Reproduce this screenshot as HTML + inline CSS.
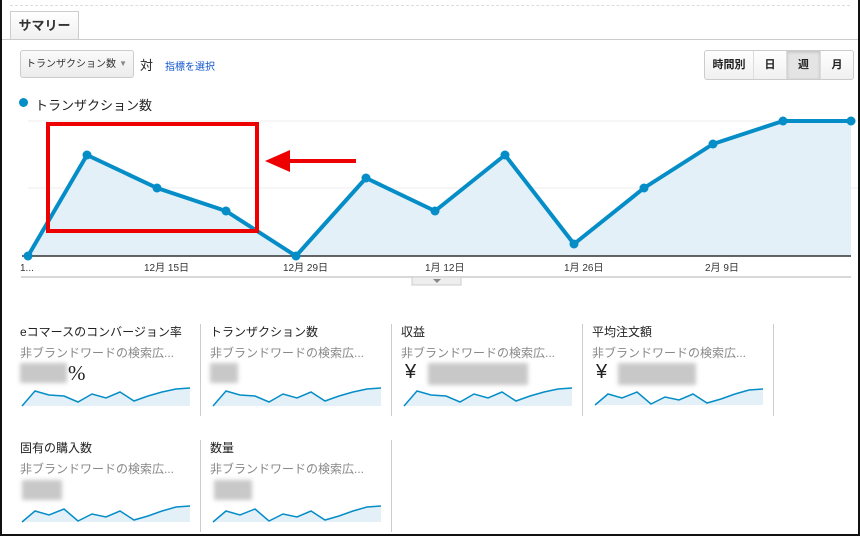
<!DOCTYPE html>
<html><head><meta charset="utf-8"><style>
body{margin:0;width:860px;height:536px;overflow:hidden;font-family:"Liberation Sans","Noto Sans CJK JP",sans-serif;background:#fff;position:relative}
.abs{position:absolute}
.tab{left:10px;top:11px;width:67px;height:27px;border:1px solid #ccc;border-bottom:none;background:linear-gradient(#fff,#f0f0f0);font-size:13px;font-weight:bold;color:#333;text-align:center;line-height:28px}
.sel{left:20px;top:50px;width:114px;height:28px;border:1px solid #ccc;border-radius:3px;background:linear-gradient(#fafafa,#ececec);font-size:10px;line-height:26px;padding-left:5px;box-sizing:border-box;color:#333}
.btns{left:704px;top:50px;height:28px;border:1px solid #ccc;border-radius:3px;display:flex;background:linear-gradient(#fff,#f0f0f0);overflow:hidden}
.btns div{font-size:11px;font-weight:bold;line-height:28px;text-align:center;border-left:1px solid #ddd;color:#222}
.card .t{font-size:12px;color:#222}
.card .s{font-size:12px;color:#888;margin-top:4px}
.blur{background:#c8c8c8;filter:blur(2px);position:absolute}
.div{position:absolute;width:1px;background:#ccc}
</style></head><body>
<div class="abs" style="left:0;top:0;width:860px;height:536px;border:2px solid #111;box-sizing:border-box;border-top:none"></div>
<div class="abs" style="left:10px;top:5px;width:840px;border-top:1px dashed #ddd"></div>
<div class="abs" style="left:2px;top:39px;width:856px;border-top:1px solid #ccc"></div>
<div class="abs tab">サマリー</div>
<div class="abs sel" style="padding-top:1px">トランザクション数<span style="position:absolute;right:6px;top:0;color:#888;font-size:8px">▼</span></div>
<div class="abs" style="left:140px;top:55px;font-size:13px;color:#222">対</div>
<div class="abs" style="left:165px;top:58px;font-size:10px;color:#15c">指標を選択</div>
<div class="abs btns"><div style="width:48px;border:none">時間別</div><div style="width:32px">日</div><div style="width:33px;background:#e4e4e4;box-shadow:inset 0 1px 3px #bbb">週</div><div style="width:32px">月</div></div>
<div class="abs" style="left:19px;top:98px;width:9px;height:9px;border-radius:50%;background:#058dc7"></div>
<div class="abs" style="left:35px;top:95px;font-size:13px;color:#222">トランザクション数</div>
<svg class="abs" style="left:0;top:110px" width="860" height="180">
<line x1="28" y1="11" x2="858" y2="11" stroke="#eee"/>
<line x1="28" y1="78" x2="858" y2="78" stroke="#eee"/>
<polygon points="28,146 87,45 157,78 226,101 296,146 366,68 435,101 505,45 574,134 644,78 713,34 783,11 851,11 851,146" fill="#e3f0f7"/>
<line x1="22" y1="146" x2="851" y2="146" stroke="#333" stroke-width="1.5"/>
<polyline points="28,146 87,45 157,78 226,101 296,146 366,68 435,101 505,45 574,134 644,78 713,34 783,11 851,11" fill="none" stroke="#058dc7" stroke-width="4" stroke-linejoin="round"/>
<g fill="#058dc7"><circle cx="28" cy="146" r="4.5"/><circle cx="87" cy="45" r="4.5"/><circle cx="157" cy="78" r="4.5"/><circle cx="226" cy="101" r="4.5"/><circle cx="296" cy="146" r="4.5"/><circle cx="366" cy="68" r="4.5"/><circle cx="435" cy="101" r="4.5"/><circle cx="505" cy="45" r="4.5"/><circle cx="574" cy="134" r="4.5"/><circle cx="644" cy="78" r="4.5"/><circle cx="713" cy="34" r="4.5"/><circle cx="783" cy="11" r="4.5"/><circle cx="851" cy="11" r="4.5"/></g>
<rect x="48" y="14" width="209" height="107" fill="none" stroke="#e00" stroke-width="4"/>
<line x1="356" y1="51" x2="285" y2="51" stroke="#e00" stroke-width="4"/>
<polygon points="265,51 290,40 290,62" fill="#e00"/>
<line x1="21" y1="167" x2="851" y2="167" stroke="#ccc" stroke-width="1.5"/>
<rect x="412" y="167" width="49" height="8" fill="#eee" stroke="#ccc"/>
<polygon points="433,169 441,169 437,173" fill="#888"/>
<g font-size="10" fill="#333"><text x="20" y="161">1...</text><text x="144" y="161">12月 15日</text><text x="283" y="161">12月 29日</text><text x="425" y="161">1月 12日</text><text x="564" y="161">1月 26日</text><text x="705" y="161">2月 9日</text></g>
</svg>
<div class="div" style="left:200px;top:324px;height:92px"></div><div class="div" style="left:391px;top:324px;height:92px"></div><div class="div" style="left:582px;top:324px;height:92px"></div><div class="div" style="left:773px;top:324px;height:92px"></div>
<div class="div" style="left:200px;top:440px;height:92px"></div><div class="div" style="left:391px;top:440px;height:92px"></div>
<div class="abs card" style="left:20px;top:323px"><div class="t">eコマースのコンバージョン率</div><div class="s">非ブランドワードの検索広...</div></div>
<div class="abs card" style="left:210px;top:323px"><div class="t">トランザクション数</div><div class="s">非ブランドワードの検索広...</div></div>
<div class="abs card" style="left:401px;top:323px"><div class="t">収益</div><div class="s">非ブランドワードの検索広...</div></div>
<div class="abs card" style="left:592px;top:323px"><div class="t">平均注文額</div><div class="s">非ブランドワードの検索広...</div></div>
<div class="abs card" style="left:20px;top:439px"><div class="t">固有の購入数</div><div class="s">非ブランドワードの検索広...</div></div>
<div class="abs card" style="left:210px;top:439px"><div class="t">数量</div><div class="s">非ブランドワードの検索広...</div></div>
<div class="blur" style="left:20px;top:363px;width:47px;height:20px"></div>
<div class="abs" style="left:68px;top:361px;font-size:21px;color:#222;font-family:'Liberation Serif',serif">%</div>
<div class="blur" style="left:210px;top:363px;width:28px;height:20px"></div>
<div class="abs" style="left:405px;top:361px;font-size:20px;color:#222">¥</div>
<div class="blur" style="left:428px;top:363px;width:100px;height:22px"></div>
<div class="abs" style="left:596px;top:361px;font-size:20px;color:#222">¥</div>
<div class="blur" style="left:618px;top:363px;width:78px;height:22px"></div>
<div class="blur" style="left:22px;top:480px;width:40px;height:20px"></div>
<div class="blur" style="left:214px;top:480px;width:38px;height:20px"></div>
<svg class="abs" style="left:0;top:0" width="860" height="536">
<defs><g id="sp"><polygon points="0,18 13,3 27,7 42,8 56,14 70,6 84,10 98,4 112,13 126,8 140,4 154,1 168,0 168,18" fill="#e3f0f7"/><polyline points="0,18 13,3 27,7 42,8 56,14 70,6 84,10 98,4 112,13 126,8 140,4 154,1 168,0" fill="none" stroke="#058dc7" stroke-width="1.5"/></g>
<g id="sp2"><polygon points="0,17 13,6 27,10 42,4 56,16 70,9 84,12 98,6 112,15 126,11 140,6 154,2 168,1 168,17" fill="#e3f0f7"/><polyline points="0,17 13,6 27,10 42,4 56,16 70,9 84,12 98,6 112,15 126,11 140,6 154,2 168,1" fill="none" stroke="#058dc7" stroke-width="1.5"/></g></defs>
<use href="#sp" x="22" y="388"/><use href="#sp" x="213" y="388"/><use href="#sp" x="404" y="388"/><use href="#sp2" x="595" y="388"/>
<use href="#sp2" x="22" y="505"/><use href="#sp2" x="213" y="505"/>
</svg>
</body></html>
